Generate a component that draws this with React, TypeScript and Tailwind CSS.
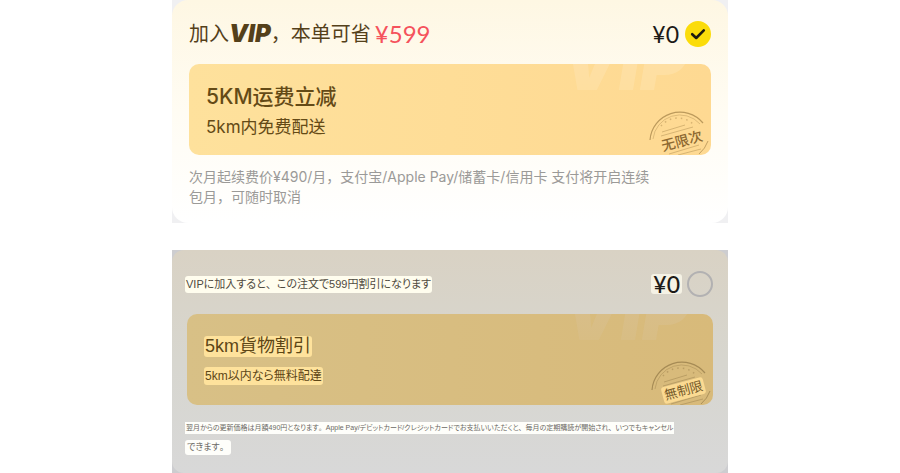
import { useState } from "react";
import type { ReactNode } from "react";

function Stamp({ className }: { className: string }) {
  return (
    <svg
      viewBox="0 0 64 48"
      fill="none"
      stroke="currentColor"
      aria-hidden="true"
      className={className}
    >
      <path d="M3 33A30 30 0 0 1 56 16" strokeWidth="1.2" />
      <path d="M6 32A27 27 0 0 1 53 17" strokeWidth="0.5" />
      <path d="M14 19A22 22 0 0 1 46 17" strokeWidth="1.5" strokeDasharray="1.5 4" opacity="0.6" />
      <path d="M15 25L38 18M14 29L46 20" strokeWidth="0.6" />
      <path d="M22 47L52 38M31 48L54 42" strokeWidth="0.6" />
      <path d="M61 34A30 30 0 0 1 52 47" strokeWidth="0.9" />
    </svg>
  );
}

function Picker({ labelledBy, initial }: { labelledBy: string; initial: boolean }) {
  const [checked, setChecked] = useState(initial);

  return (
    <span className="relative block size-[26px]">
      <input
        type="checkbox"
        aria-labelledby={labelledBy}
        checked={checked}
        onChange={(e) => setChecked(e.target.checked)}
        className="block size-[26px] cursor-pointer appearance-none rounded-full border-2 border-[#b2b1b2] checked:border-[#fbdc0a] checked:bg-[#fbdc0a]"
      />
      {checked && (
        <svg
          viewBox="0 0 26 26"
          fill="none"
          stroke="#1d1a10"
          strokeWidth="2.6"
          strokeLinecap="round"
          strokeLinejoin="round"
          aria-hidden="true"
          className="pointer-events-none absolute inset-0"
        >
          <path d="M7.2 13.2L11.2 17L18.8 9.4" />
        </svg>
      )}
    </span>
  );
}

// Punctuation keeps its full-width advance inside proportional kana
function Full({ children }: { children: ReactNode }) {
  return <span className="[font-feature-settings:normal]">{children}</span>;
}

function ChineseCard() {
  return (
    <section lang="zh-CN" className="bg-[#f0f0f2] font-['Inter','Noto_Sans_CJK_SC',sans-serif]">
      <div className="rounded-2xl bg-linear-to-b from-[#fef7e3] via-[#fffcf3] to-[#ffffff] px-[17px] pt-5 pb-4">
        <div className="flex h-7 items-center justify-between">
          <h2 id="vip-zh" className="flex items-center text-[20px] leading-7 text-[#54401a]">
            <span>加入</span>
            <span className="text-[24px] font-black italic">VIP</span>
            <span>，本单可省</span>
            <span className="ml-1 font-['Lato',sans-serif] text-[24px] text-[#f5525c]">¥599</span>
          </h2>
          <div className="flex items-center gap-1.5">
            <span className="font-['Lato',sans-serif] text-[23px] leading-5 text-[#1c1a17]">¥0</span>
            <Picker labelledBy="vip-zh" initial={true} />
          </div>
        </div>

        <div className="relative mt-4 h-[91px] overflow-hidden rounded-[10px] bg-linear-to-r from-[#fee19c] to-[#fed992] px-[17px] pt-[18px] text-[#644a16]">
          <span
            aria-hidden="true"
            className="absolute -top-8 right-6 bg-linear-to-t from-[#fedf9f] to-[#fedfa8] bg-clip-text text-[72px] leading-16 font-black text-transparent italic"
          >
            VIP
          </span>
          <h3 className="relative text-[21px] leading-[30px] font-medium">5KM运费立减</h3>
          <p className="relative text-[17px] leading-[30px]">5km内免费配送</p>
          <Stamp className="absolute right-0 bottom-0 h-12 w-16 text-[#bc9a5c]" />
          <span className="absolute right-2 bottom-1 -rotate-15 text-[14px] leading-5 font-medium text-[#8d6931]">
            无限次
          </span>
        </div>

        <p className="mt-3 text-[14px] leading-5 text-[#9b9a98]">
          次月起续费价¥490/月，支付宝/Apple Pay/储蓄卡/信用卡 支付将开启连续
          <br />
          包月，可随时取消
        </p>
      </div>
    </section>
  );
}

function JapaneseCard() {
  return (
    <section
      lang="ja"
      className="bg-[#cdcdd0] font-['Liberation_Sans','Noto_Sans_CJK_JP',sans-serif] [font-feature-settings:'palt']"
    >
      <div className="rounded-xl bg-linear-to-b from-[#d9d2c4] via-[#d7d6cf] to-[#d8d8d8] px-[15px] pt-5 pb-[18px]">
        <div className="flex h-7 items-center justify-between">
          <h2
            id="vip-ja"
            className="-ml-0.5 rounded-[3px] bg-[#fffdee] px-px text-[11px] leading-[17px] text-[#4f4a3e]"
          >
            VIPに加入すると<Full>、</Full>この注文で599円割引になります
          </h2>
          <div className="flex items-center gap-[5px]">
            <span className="rounded-[3px] bg-[#f5f2e5] px-0.5 font-['Lato',sans-serif] text-[23px] leading-5 font-medium text-[#1c1a17]">
              ¥0
            </span>
            <Picker labelledBy="vip-ja" initial={false} />
          </div>
        </div>

        <div className="relative mt-4 flex h-[91px] flex-col items-start gap-2.5 overflow-hidden rounded-[10px] bg-linear-to-r from-[#d8c086] to-[#d8ba7a] px-[17px] pt-[22px] text-[#5d4616]">
          <span
            aria-hidden="true"
            className="absolute -top-8 right-6 bg-linear-to-t from-[#d8bd83] to-[#d9bf8d] bg-clip-text font-['Inter',sans-serif] text-[72px] leading-16 font-black text-transparent italic"
          >
            VIP
          </span>
          <h3 className="relative rounded-[3px] bg-[#fee29c] px-px text-[18px] leading-[21px]">5km貨物割引</h3>
          <p className="relative rounded-[3px] bg-[#fee29c] px-px text-[12px] leading-[18px]">5km以内なら無料配達</p>
          <Stamp className="absolute right-0 bottom-0 h-12 w-16 text-[#a68b55]" />
          <span className="absolute right-2 bottom-1.5 -rotate-15 rounded-[3px] bg-[#fbda92] px-0.5 text-[13px] leading-[17px] text-[#765a2a]">
            無制限
          </span>
        </div>

        <div className="-ml-0.5 mt-[17px] flex flex-col items-start gap-1.5 text-[#6b6963]">
          <p className="bg-[#fefefa] px-px text-[7px] leading-3 whitespace-nowrap">
            翌月からの更新価格は月額490円となります<Full>。</Full>Apple Pay/デビットカード/クレジットカードでお支払いいただくと<Full>、</Full>毎月の定期購読が開始され<Full>、</Full>いつでもキャンセル
          </p>
          <p className="rounded-[3px] bg-[#fefefa] px-0.5 text-[9px] leading-[15px]">
            できます<Full>。</Full>
          </p>
        </div>
      </div>
    </section>
  );
}

export default function App() {
  return (
    <main className="mx-auto flex w-full max-w-[556px] flex-col gap-[27px] bg-white">
      <ChineseCard />
      <JapaneseCard />
    </main>
  );
}
